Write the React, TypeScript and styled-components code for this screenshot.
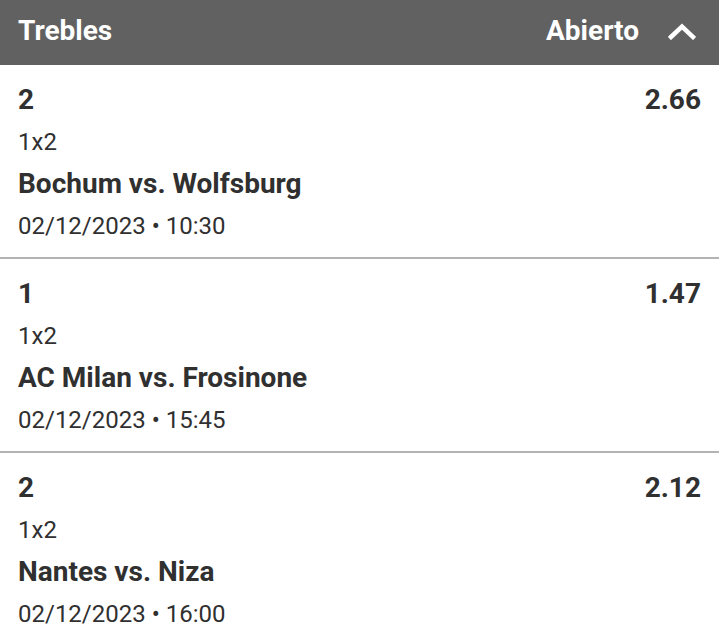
import React from "react";
import styled, { createGlobalStyle } from "styled-components";

const GlobalStyle = createGlobalStyle`
  html, body {
    margin: 0;
    padding: 0;
    background: #ffffff;
  }
  body {
    font-family: Roboto, "Noto Sans", "Liberation Sans", sans-serif;
  }
`;

const Panel = styled.section`
  width: 719px;
  background: #ffffff;
`;

const Header = styled.header`
  height: 65px;
  background: #616161;
  display: flex;
  align-items: center;
  justify-content: space-between;
  padding: 0 23px 0 18px;
  box-sizing: border-box;
  color: #ffffff;
`;

const Title = styled.h2`
  margin: 0;
  font-size: 28px;
  font-weight: 700;
  line-height: 1;
  margin-top: -4px;
`;

const Status = styled.div`
  display: flex;
  align-items: center;
  gap: 29px;
  font-size: 28px;
  font-weight: 700;
  line-height: 1;
  margin-top: -4px;
`;

const Chevron = styled.svg`
  width: 28px;
  height: 18px;
  display: block;
`;

const Row = styled.article`
  display: flex;
  justify-content: space-between;
  padding: 14px 18px 10px 18px;
  border-bottom: 2px solid #b3b3b3;
  color: #303030;

  &:last-child {
    border-bottom: none;
  }
`;

const Info = styled.div`
  display: flex;
  flex-direction: column;
`;

const Line = styled.div<{ $bold?: boolean }>`
  height: 42px;
  line-height: 42px;
  font-size: ${(p) => (p.$bold ? "28px" : "24px")};
  font-weight: ${(p) => (p.$bold ? 700 : 400)};
  white-space: nowrap;
`;

const Odds = styled.div`
  height: 42px;
  line-height: 42px;
  font-size: 28px;
  font-weight: 700;
`;

const bets = [
  { pick: "2", market: "1x2", match: "Bochum vs. Wolfsburg", date: "02/12/2023 • 10:30", odds: "2.66" },
  { pick: "1", market: "1x2", match: "AC Milan vs. Frosinone", date: "02/12/2023 • 15:45", odds: "1.47" },
  { pick: "2", market: "1x2", match: "Nantes vs. Niza", date: "02/12/2023 • 16:00", odds: "2.12" },
];

export default function App() {
  return (
    <>
      <GlobalStyle />
      <Panel>
        <Header>
          <Title>Trebles</Title>
          <Status>
            <span>Abierto</span>
            <Chevron viewBox="0 0 28 18">
              <polyline
                points="3,15 14,4.5 25,15"
                fill="none"
                stroke="#ffffff"
                strokeWidth="4.5"
                strokeLinecap="square"
                strokeLinejoin="miter"
              />
            </Chevron>
          </Status>
        </Header>
        {bets.map((b, i) => (
          <Row key={i}>
            <Info>
              <Line $bold>{b.pick}</Line>
              <Line>{b.market}</Line>
              <Line $bold>{b.match}</Line>
              <Line>{b.date}</Line>
            </Info>
            <Odds>{b.odds}</Odds>
          </Row>
        ))}
      </Panel>
    </>
  );
}
